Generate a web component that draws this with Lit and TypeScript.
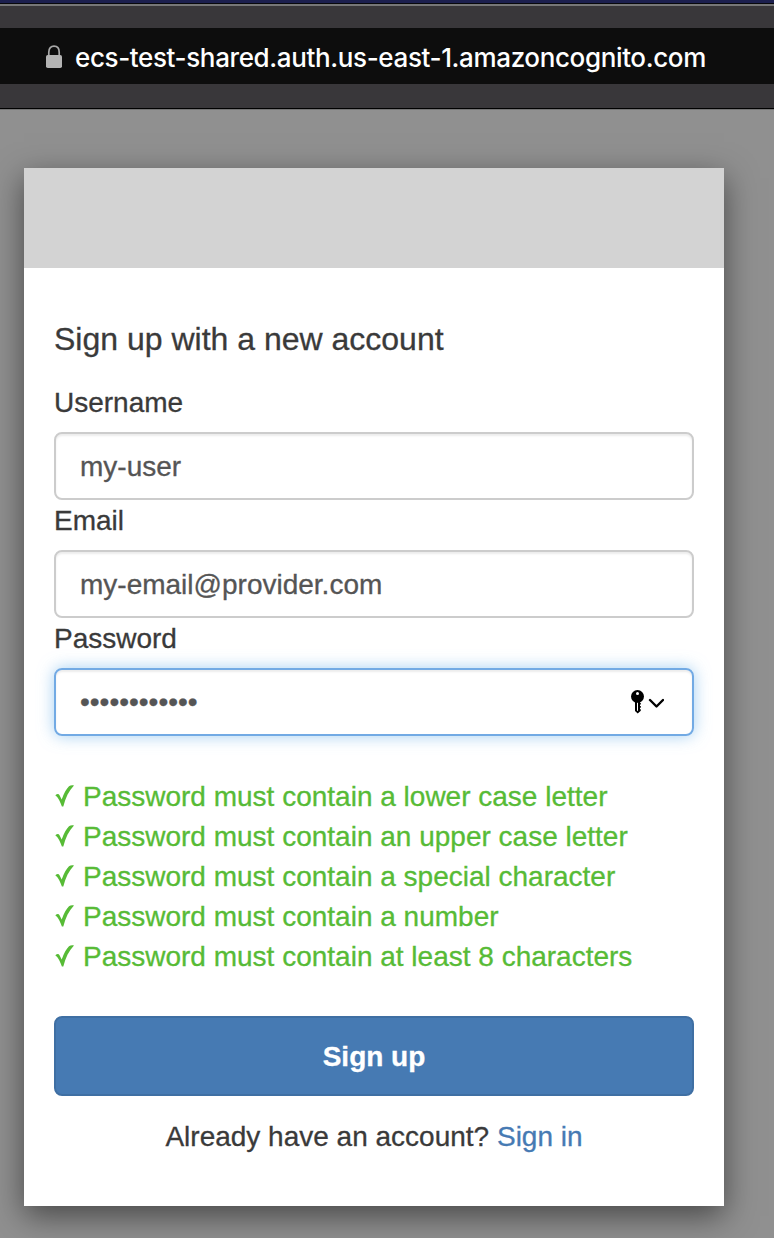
import { LitElement, html, css } from "lit";
import { customElement } from "lit/decorators.js";

const RULES = [
  "Password must contain a lower case letter",
  "Password must contain an upper case letter",
  "Password must contain a special character",
  "Password must contain a number",
  "Password must contain at least 8 characters",
];

@customElement("app-root")
export class AppRoot extends LitElement {
  static styles = css`
    :host {
      display: flex;
      flex-direction: column;
      width: 774px;
      height: 1238px;
      overflow: hidden;
      background: #909090;
      font: 28px/42px "Liberation Sans", Arial, sans-serif;
      color: #3a3a3a;
    }
    * { box-sizing: border-box; }
    .strip {
      flex: none;
      height: 6px;
      background: linear-gradient(#1c1f4e 3px, #08080c 3px 4px, #777778 4px);
    }
    .toolbar {
      flex: none;
      height: 104px;
      padding: 22px 0 24px;
      background: #39373a;
      border-bottom: 1px solid #747474;
      box-shadow: inset 0 -1px #000;
    }
    .address {
      display: flex;
      align-items: center;
      height: 56px;
      padding: 0 0 0 46px;
      background: #0d0d0d;
      color: #fff;
      font: 500 26px/36px Inter, sans-serif;
      letter-spacing: -0.37px;
      white-space: nowrap;
    }
    .lock { width: 16px; height: 24px; margin: 2px 13px 0 0; }
    .url { padding-top: 4px; }
    .card {
      flex: none;
      width: 700px;
      height: 1038px;
      margin: 58px 0 0 24px;
      background: #fff;
      box-shadow: 0 10px 30px rgba(0, 0, 0, 0.5);
      -webkit-text-stroke: 0.3px currentColor;
    }
    .banner { height: 100px; background: #d3d3d3; }
    .body { padding: 48px 30px 0; display: flex; flex-direction: column; }
    .title { margin: 0; font-weight: 400; font-size: 32px; line-height: 46px; }
    .form { display: flex; flex-direction: column; margin-top: 20px; }
    .label { height: 50px; }
    .input {
      display: flex;
      align-items: center;
      justify-content: space-between;
      height: 68px;
      padding: 0 28px 0 24px;
      border: 2px solid #ccc;
      border-radius: 8px;
      color: #555;
      box-shadow: inset 0 2px 2px rgba(0, 0, 0, 0.075);
    }
    .value { padding-top: 2px; }
    .dots { padding-top: 0; }
    .focus {
      border-color: #72aae4;
      box-shadow: inset 0 2px 2px rgba(0, 0, 0, 0.075), 0 0 16px rgba(102, 175, 233, 0.6);
    }
    .key { width: 34px; height: 26px; }
    .rules { list-style: none; margin: 40px 0 0; padding: 0; color: #57bb36; }
    .rule { display: flex; align-items: center; height: 40px; white-space: nowrap; }
    .text { padding-top: 2px; }
    .tick { width: 20px; height: 22px; margin-right: 9px; }
    .button {
      display: block;
      height: 80px;
      margin: 40px 0 0;
      padding: 2px 0 0;
      border: 2px solid #3f6fa3;
      border-radius: 8px;
      background: #467ab3;
      color: #fff;
      font: bold 28px/40px "Liberation Sans", Arial, sans-serif;
    }
    .footer { margin-top: 20px; text-align: center; }
    .link { color: #467ab3; }
  `;

  render() {
    return html`
      <div class="strip"></div>
      <div class="toolbar">
        <div class="address">
          <svg class="lock" viewBox="0 0 16 24">
            <path d="M2.800 11V7.200C2.800 3.200 5 1.200 8 1.200s5.200 2 5.200 6V11" fill="none" stroke="#a8a8a8" stroke-width="1.700" />
            <rect y="10" width="16" height="13" rx="1.800" fill="#b3b3b3" />
          </svg>
          <span class="url">ecs-test-shared.auth.us-east-1.amazoncognito.com</span>
        </div>
      </div>
      <main class="card">
        <div class="banner"></div>
        <div class="body">
          <h1 class="title"><span>Sign up with a new account</span></h1>
          <div class="form">
            <label class="label">Username</label>
            <div class="input"><span class="value">my-user</span></div>
            <label class="label">Email</label>
            <div class="input"><span class="value">my-email@provider.com</span></div>
            <label class="label">Password</label>
            <div class="input focus">
              <span class="dots">••••••••••••</span>
              <svg class="key" viewBox="0 0 34 26">
                <circle cx="7.500" cy="7.500" r="6.500" />
                <path d="M5 12h5v2h.8v1.500h-.8v1.500h.8v1.800h-.8v1.400h.8v1.500L7.700 24.500 5 22z" />
                <circle cx="7.500" cy="4.500" r="1.500" fill="#fff" />
                <path d="M7.500 13.800v8" stroke="#fff" stroke-width="1" />
                <path d="M20 11l6.500 6.500L33 11" fill="none" stroke="#000" stroke-width="2.400" stroke-linecap="round" stroke-linejoin="round" />
              </svg>
            </div>
            <ul class="rules">
              ${RULES.map((r) => html`<li class="rule">
                <svg class="tick" viewBox="0 0 20 22">
                  <path d="M1.300 10.200C3 9 4.600 8.600 5.400 10L7.700 14.500C10 8 12.500 3.500 15 1.200 16.300.2 18 .2 20 .4 15 5.500 11.500 12.500 9.300 21.500H7.900C6.300 17 4.300 12.500 1.300 10.200z" fill="currentColor" />
                </svg><span class="text">${r}</span></li>`)}
            </ul>
            <button class="button">Sign up</button>
            <div class="footer">Already have an account? <span class="link">Sign in</span></div>
          </div>
        </div>
      </main>
    `;
  }
}
